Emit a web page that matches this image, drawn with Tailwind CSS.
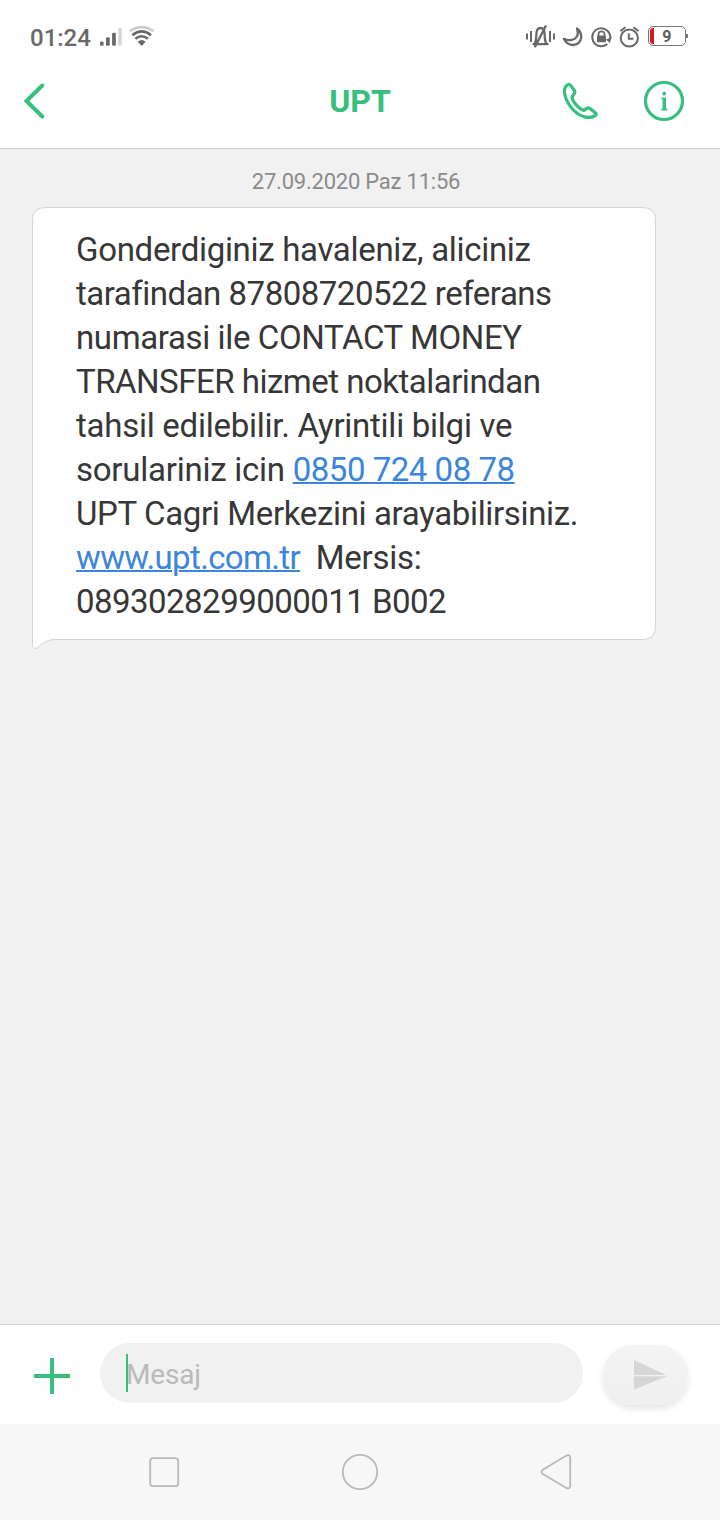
<!DOCTYPE html>
<html lang="tr">
<head>
<meta charset="utf-8">
<title>UPT</title>
<script src="https://cdn.jsdelivr.net/npm/@tailwindcss/browser@4"></script>
</head>
<body class="w-[720px] h-[1520px] flex flex-col overflow-hidden bg-[#f1f1f1] font-['Roboto',sans-serif]">
  <header class="h-[149px] shrink-0 bg-white border-b border-[#cfcfcf]">
    <div class="h-[74px] flex justify-between pl-[30px] pr-[34px]">
      <div class="flex">
        <span class="w-[70px] pt-[20px] text-[24px] leading-[36px] font-medium text-[#686868] whitespace-nowrap">01:24</span>
        <svg class="w-[56px] h-[74px]" viewBox="100 0 56 74" fill="none">
          <g fill="#686868"><rect x="100" y="41.5" width="3.6" height="4.2" rx="1.2"/><rect x="106" y="37.3" width="3.7" height="8.4" rx="1.2"/><rect x="112.1" y="32.7" width="3.7" height="13" rx="1.2"/></g>
          <rect x="118.2" y="28" width="3.6" height="17.7" rx="1.2" fill="#d6d6d6"/>
          <path d="M129.8 31.2Q141.7 23 153.6 31.2" stroke="#cdcdcd" stroke-width="2.7"/>
          <g stroke="#686868" stroke-width="2.6"><path d="M132.4 35.2Q141.7 27.7 151 35.2"/><path d="M135.4 38.8Q141.7 33.7 148 38.8"/></g>
          <path d="M137.8 41.8Q141.7 38.4 145.6 41.8L141.7 45.9Z" fill="#686868"/>
        </svg>
      </div>
      <div class="flex">
        <svg class="w-[124px] h-[74px]" viewBox="524 0 124 74" fill="none" stroke="#686868">
          <path d="M527 33.5V39.5M531 31V42M550 31V42M554 33.5V39.5" stroke-width="2"/>
          <path d="M532.5 44.2H548.5M534.5 44Q536.3 41 536.3 35Q536.3 28 540.5 28Q544.7 28 544.7 35Q544.7 41 546.5 44M534.8 47.3L546 25.5" stroke-width="2.3"/>
          <path d="M577 28.5Q580 38 571.5 40Q567 40.8 563.8 38.6Q567 45.3 573.2 45Q580.2 44.3 581.3 37.4Q581.4 32 577 28.5Z" stroke-width="2.3" stroke-linejoin="round"/>
          <path d="M607.3 43.9A9 9 0 1 1 610.2 38.2" stroke-width="2"/><path d="M606 39.5L611.8 37.2L609.7 42.9Z" fill="#686868" stroke="none"/>
          <rect x="597" y="35.5" width="9" height="6.7" rx=".8" fill="#686868" stroke="none"/><path d="M598.5 36V34.3A3 3 0 0 1 604.5 34.3V36" stroke-width="1.7"/>
          <circle cx="629.3" cy="38" r="8.6" stroke-width="2"/><path d="M628.8 33.5V38.8H633.5M620.3 31L625.5 27.2M633.3 27.2L638.5 31" stroke-width="2"/>
        </svg>
        <div class="mt-[26px] h-[20px] w-[38px] relative border-[1.5px] border-[#777] rounded-[5px] pl-[1px] flex items-center">
          <span class="w-[3.5px] h-[16px] bg-[#cd1c20] rounded-l-[3px]"></span>
          <span class="flex-1 pt-[2px] pr-[5px] text-center text-[16px] leading-[16px] font-bold text-[#606060]">9</span>
          <span class="absolute right-[-3px] top-[7px] w-[2px] h-[4px] bg-[#777]"></span>
        </div>
      </div>
    </div>
    <div class="h-[74px] flex justify-between">
      <svg class="w-[180px] h-[74px]" viewBox="0 74 180 74" fill="none"><path d="M42.3 85.5L26.5 101L42.3 116.5" stroke="#36bf7d" stroke-width="4" stroke-linecap="round" stroke-linejoin="miter"/></svg>
      <h1 class="pt-[7px] text-[32px] leading-[40px] font-bold text-[#36bf7d]">UPT</h1>
      <svg class="w-[180px] h-[74px]" viewBox="540 74 180 74" fill="none" stroke="#36bf7d" stroke-width="3.2" stroke-linejoin="round" stroke-linecap="round">
        <path d="M568.4 84.4Q564.3 85.8 564.5 92C565.2 101.5 573.5 113.2 583.5 116.6Q591.5 118.8 595.7 115.3Q596.9 113.9 595 112.6L589.6 108.3Q588 107.2 586.5 108.6L584 110.4Q580.5 109.5 576.2 104.8Q572.3 100.5 572 97.1L574.5 93.2Q575.2 91.8 574.2 90.2L570.5 85.3Q569.5 84.1 568.4 84.4Z"/>
        <circle cx="664" cy="101" r="18.5"/>
        <g fill="#36bf7d" stroke="none"><circle cx="664.2" cy="93.7" r="1.9"/><path d="M661.3 97.5H666V108.7H667.3V110.5H661.3V108.7H662.6V99H661.3Z"/></g>
      </svg>
    </div>
  </header>

  <main class="flex-1 min-h-0 flex flex-col">
    <time class="h-[58px] pt-[18px] pr-[8px] text-center text-[22px] leading-[30px] tracking-[-0.22px] text-[#8b8b8b]">27.09.2020 Paz 11:56</time>
    <section class="relative ml-[32px] w-[625px] h-[443px]">
      <svg class="absolute inset-0 w-[625px] h-[443px]" viewBox="0 0 625 443" fill="#fff" stroke="#d3d3d3"><path d="M13.5 .5H610.5Q623.5 .5 623.5 13.5V419.5Q623.5 432.5 610.5 432.5H23.5C14 432.5 9 437.5 6 440.5Q.5 443.5 .5 437.5V13.5Q.5 .5 13.5 .5Z"/></svg>
      <div class="relative pt-[21px] pl-[44px] text-[33px] leading-[44px] text-[#373737] whitespace-nowrap">
        <p class="tracking-[-0.31px]">Gonderdiginiz havaleniz, aliciniz</p>
        <p class="tracking-[-0.49px]">tarafindan 87808720522 referans</p>
        <p class="tracking-[-0.38px]">numarasi ile CONTACT MONEY</p>
        <p class="tracking-[-0.5px]">TRANSFER hizmet noktalarindan</p>
        <p class="tracking-[-0.26px]">tahsil edilebilir. Ayrintili bilgi ve</p>
        <p class="tracking-[-0.25px]">sorulariniz icin <a class="text-[#3b86dc] underline decoration-2 tracking-[-0.48px]">0850 724 08 78</a></p>
        <p class="tracking-[-0.35px]">UPT Cagri Merkezini arayabilirsiniz.</p>
        <p class="tracking-[-0.3px]"><a class="text-[#3b86dc] underline decoration-2 tracking-[-0.64px]">www.upt.com.tr</a>&nbsp; Mersis:</p>
        <p class="tracking-[-0.53px]">0893028299000011 B002</p>
      </div>
    </section>
  </main>

  <form class="h-[100px] shrink-0 bg-white border-t border-[#cfcfcf] flex">
    <svg class="w-[100px] h-[99px]" viewBox="0 1325 100 99"><path d="M34 1376H70M52 1358V1394" stroke="#36bf7d" stroke-width="4"/></svg>
    <div class="mt-[18px] w-[483px] h-[60px] rounded-full bg-[#f1f1f1] pl-[26px] flex items-center">
      <span class="w-[2px] h-[38px] bg-[#36bf7d]"></span>
      <span class="-ml-[2px] pt-[3px] text-[28px] leading-[40px] tracking-[-0.2px] text-[#bababa]">Mesaj</span>
    </div>
    <div class="ml-[20px] mt-[20px] w-[85px] h-[60px] rounded-[30px] bg-linear-to-b from-[#f4f4f4] to-[#efefef] shadow-[0_4px_7px_rgba(0,0,0,0.10)]">
      <svg class="w-[85px] h-[60px]" viewBox="603 1345 85 60" fill="#d6d6d6"><path d="M634 1360L666 1375H634ZM634 1376.2H667L634 1389.5Z"/></svg>
    </div>
  </form>
  <nav class="h-[96px] shrink-0 bg-[#f7f7f7]">
    <svg class="w-[720px] h-[96px]" viewBox="0 1424 720 96" fill="none" stroke="#b9b9b9" stroke-width="1.8">
      <rect x="150.2" y="1458.2" width="28" height="28" rx="3"/>
      <circle cx="360" cy="1472" r="17.2"/>
      <path d="M542.8 1469.8L566 1455.8Q570.2 1453.8 570.2 1458V1485.5Q570.2 1489.5 566 1487.8L542.8 1474Q540.3 1472 542.8 1469.8Z"/>
    </svg>
  </nav>
</body>
</html>
